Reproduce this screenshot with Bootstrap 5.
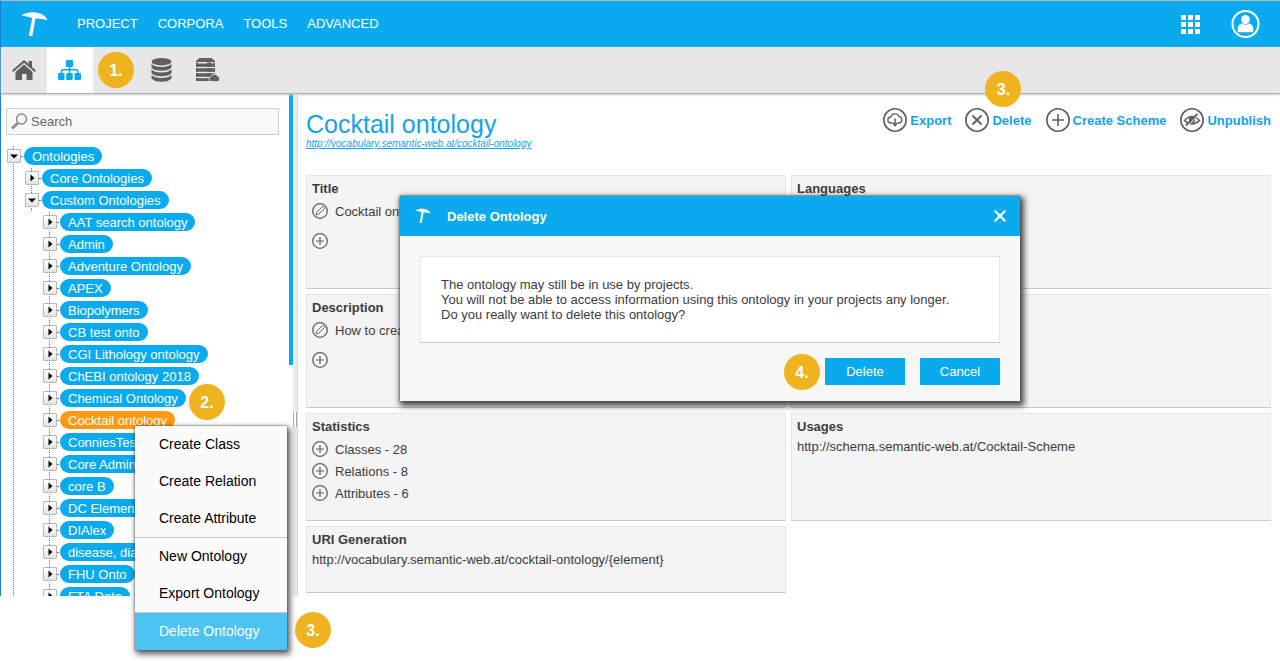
<!DOCTYPE html>
<html lang="en">
<head>
<meta charset="utf-8">
<meta name="viewport" content="width=device-width, initial-scale=1">
<title>Cocktail ontology</title>
<link href="https://cdn.jsdelivr.net/npm/bootstrap@5.3.0/dist/css/bootstrap.min.css" rel="stylesheet">
<style>
  :root { --brand: #0aabee; --ink: #3c3c3c; --icon: #5f5f5f; }
  body { font-family: "Liberation Sans", Arial, sans-serif; font-size: 13px; line-height: 15px; color: var(--ink); background: #fff; }
  a { text-decoration: none; }
  svg { display: block; flex: none; }
  .app { height: calc(100vh - 65px); border-top: 1px solid #b4b4b4; border-left: 1px solid #1b7fd4; background: #fefefe; }

  /* header */
  .topbar { background: var(--brand); height: 46px; padding: 0 20px; flex: none; }
  .topbar .nav-link { color: #fff; padding: 0 0 2px; }
  .main-menu { gap: 20px; margin-left: 29px; }
  .topbar-right { gap: 30px; }
  .icon-btn { border: 0; background: none; padding: 0; color: inherit; }
  .toolbar { background: #e7e7e7; height: 47px; border-bottom: 1px solid #b0b0b0; box-shadow: 0 1px 2px #ccc; flex: none; position: relative; z-index: 1; }
  .tool { width: 46px; color: var(--icon); }
  .tool.active { background: #fff; color: var(--brand); }
  .step { width: 36px; height: 36px; border-radius: 50%; background: #efb31f; color: #fff; font-weight: bold; font-size: 16px; flex: none; display: flex; align-items: center; justify-content: center; z-index: 5; }

  /* tree */
  .sidebar { width: 288px; flex: none; padding: 14px 0 0 5px; overflow: hidden; }
  .search-box { width: 273px; height: 27px; border: 1px solid #cfcfcf; background: #f8f8f8; padding-left: 4px; gap: 3px; }
  .search-box input { border: 0; background: none; padding: 0; color: #666; outline: 0; }
  .search-box input::placeholder { color: #666; }
  .tree { margin: 10px 0 0 1px; }
  .tree ul { padding-left: 18px; }
  .node { position: relative; height: 22px; gap: 3px; }
  .node::before, .root-item::before { content: ""; position: absolute; left: 6px; top: 1px; bottom: 0; border-left: 1px dotted #777; }
  .node::after { content: ""; position: absolute; left: 14px; width: 4px; top: 11px; border-top: 1px dotted #777; }
  .root-item { position: relative; }
  .toggle { position: relative; z-index: 1; width: 14px; height: 14px; padding: 0; border: 1px solid #b9b9b9; border-radius: 1px; background: linear-gradient(#fff, #e4e4e4); display: flex; align-items: center; justify-content: center; color: #000; }
  .pill { height: 18px; border-radius: 9px; background: var(--brand); color: #fff; padding: 2px 8px 0; line-height: 15px; white-space: nowrap; position: relative; z-index: 1; }
  .pill.chosen { background: #ff9812; }
  .track { width: 4px; flex: none; background: #fefefe; }
  .thumb { height: 54%; background: var(--brand); }
  .splitter { width: 5px; flex: none; background: #ebebeb; border-right: 1px solid #d8d8d8; padding-top: 148px; }
  .grip { width: 4px; height: 15px; border: solid #aaa; border-width: 0 1px; background: #fff; }

  /* details */
  .details { padding: 0 9px 0 8px; min-width: 0; }
  .details-head { height: 81px; padding-top: 16px; }
  h1 { font-size: 25px; line-height: 28px; font-weight: normal; color: #14a3ea; margin: 0; }
  .uri { font-size: 10px; line-height: 12px; font-style: italic; text-decoration: underline; color: #14a3ea; display: block; }
  .actions { gap: 14px; height: 24px; margin-top: -2px; }
  .action { gap: 3px; font-weight: bold; color: #12a3ea; border: 0; background: none; padding: 0; position: relative; white-space: nowrap; }
  .action svg, .panel svg { color: var(--icon); }
  .action .step { position: absolute; left: 20px; bottom: 25px; }
  .panels { display: grid; grid-template-columns: 1fr 1fr; gap: 5px; }
  .panel { background: #f4f4f4; border: 1px solid #e6e6e6; border-bottom-color: #c8c8c8; padding: 5px; min-height: 67px; }
  .panel.tall { min-height: 114px; }
  .panel.mid { min-height: 108px; }
  .panel h2 { font-size: 13px; line-height: 15px; font-weight: bold; margin: 0 0 5px; }
  .line { gap: 7px; height: 22px; }
  .tall .line { margin-bottom: 8px; }
  .panel.listed h2 { margin-bottom: 4px; }

  /* overlays */
  .context { position: absolute; left: 135px; top: 426px; width: 152px; background: #fbfbfb; box-shadow: 0 0 2px #555, 2px 3px 6px 1px rgba(0,0,0,.65); z-index: 10; }
  .context button { display: block; width: 100%; height: 37px; padding: 0 0 0 24px; border: 0; background: none; color: #000; font-size: 14px; text-align: left; }
  .context .rule { height: 1px; background: #c8c8c8; }
  .context button.hot { background: #4dc3f2; color: #fff; }
  .context .step { position: absolute; left: 160px; bottom: 2px; }
  .step-tree { position: absolute; left: 189px; top: 384px; }
  .dialog { position: absolute; left: 400px; top: 196px; width: 620px; background: #f7f7f7; box-shadow: 0 0 2px #444, 2px 3px 6px 2px rgba(0,0,0,.7); z-index: 8; }
  .dialog-head { background: var(--brand); color: #fff; height: 40px; padding: 0 14px 0 15px; font-weight: bold; }
  .dialog-text { margin: 20px 20px 15px; padding: 20px; background: #fff; border: 1px solid #e6e6e6; border-bottom-color: #c8c8c8; }
  .dialog-foot { padding: 0 20px 16px; gap: 15px; position: relative; }
  .dialog-foot .btn { width: 80px; height: 27px; padding: 0; border: 0; border-radius: 0; background: var(--brand); color: #fff; font-size: 13px; line-height: 27px; }
  .dialog-foot .step { position: absolute; right: 200px; top: -4px; }
</style>
</head>
<body class="position-relative min-vh-100">
<svg width="0" height="0" class="position-absolute" aria-hidden="true">
  <symbol id="umbrella" viewBox="0 0 27 25"><path fill="currentColor" d="M0 3.800C4 .9 8 .2 12 .2C19 .3 25 3.600 26.500 8.300C22.500 6.700 18 6.800 14.500 6.500L11.200 24.300L7.900 23.800L11.200 6C7 4.800 3.500 3.600 0 3.800Z"/></symbol>
  <symbol id="plus" viewBox="0 0 16 16"><g fill="none" stroke="currentColor"><circle cx="8" cy="8" r="7.300" stroke-width="1.300"/><path d="M8 4v8M4 8h8" stroke-width="1.200"/></g></symbol>
  <symbol id="pencil" viewBox="0 0 16 16"><g fill="none" stroke="currentColor"><circle cx="8" cy="8" r="7.300" stroke-width="1.300"/><path d="M4 12l.8-2.800 6-6 2 2-6 6z" stroke-width=".9"/></g></symbol>
  <symbol id="right" viewBox="0 0 8 8"><path fill="currentColor" d="M2.500 .5L6.500 4L2.500 7.500Z"/></symbol>
  <symbol id="down" viewBox="0 0 8 8"><path fill="currentColor" d="M0 2.500H8L4 6.500Z"/></symbol>
</svg>

<div class="app d-flex flex-column">
  <header class="topbar d-flex align-items-center">
    <a href="#" class="text-white" aria-label="Home"><svg width="27" height="25"><use href="#umbrella"/></svg></a>
    <nav class="nav main-menu flex-grow-1">
      <a class="nav-link" href="#">PROJECT</a><a class="nav-link" href="#">CORPORA</a><a class="nav-link" href="#">TOOLS</a><a class="nav-link" href="#">ADVANCED</a>
    </nav>
    <div class="topbar-right d-flex align-items-center text-white">
      <button class="icon-btn" aria-label="Applications"><svg width="20" height="19" fill="currentColor"><path d="M0 0h5v5H0zM7 0h5v5H7zM14 0h5v5h-5zM0 7h5v5H0zM7 7h5v5H7zM14 7h5v5h-5zM0 14h5v5H0zM7 14h5v5H7zM14 14h5v5h-5z"/></svg></button>
      <button class="icon-btn" aria-label="Account"><svg width="29" height="28" viewBox="0 0 29 28"><circle cx="14.500" cy="14" r="13" fill="none" stroke="#fff" stroke-width="2"/><g fill="#fff"><ellipse cx="14.500" cy="9.500" rx="4.300" ry="4.600"/><path d="M6.500 20.500c0-4 1.500-6.200 4.300-7.200c2 1.900 5.400 1.900 7.400 0c2.800 1 4.300 3.200 4.300 7.200q0 1.700-1.700 1.700H8.200q-1.700 0-1.700-1.700z"/></g></svg></button>
    </div>
  </header>

  <nav class="toolbar d-flex">
    <a href="#" class="tool d-flex align-items-center justify-content-center" aria-label="Dashboard"><svg width="24" height="20" fill="currentColor" viewBox="0 0 24 20"><path d="M12 0L0 10.500L1.300 12L12 2.800L22.700 12L24 10.500L20 7V1h-3.500v3z"/><path d="M12 4.600L3.500 12v8H10v-6h4.500v6H20.500v-8z"/></svg></a>
    <a href="#" class="tool active d-flex align-items-center justify-content-center" aria-label="Ontologies"><svg width="24" height="20" viewBox="0 0 24 20"><g fill="currentColor"><rect x="8" width="7" height="7" rx="1"/><rect y="13" width="6.500" height="7" rx="1"/><rect x="8.200" y="13" width="6.500" height="7" rx="1"/><rect x="16.500" y="13" width="6.500" height="7" rx="1"/></g><path d="M11.500 6v8M3.500 14v-3q0-1.300 1.300-1.300h13.600q1.300 0 1.300 1.300v3" fill="none" stroke="currentColor" stroke-width="1.600"/></svg></a>
    <span class="tool d-flex align-items-center justify-content-center"><span class="step">1.</span></span>
    <a href="#" class="tool d-flex align-items-center justify-content-center" aria-label="Data"><svg width="22" height="24" viewBox="0 0 22 24" fill="currentColor"><ellipse cx="10.500" cy="3.700" rx="10" ry="3.700"/><path d="M.5 6q3 3 10 3t10-3v3.500q-2.500 3.200-10 3.200T.5 9.500zM.5 11.500q3 3 10 3t10-3V15q-2.500 3.200-10 3.200T.5 15zM.5 17q3 3 10 3t10-3v3.300q-2.500 3.500-10 3.500T.5 20.300z"/></svg></a>
    <a href="#" class="tool d-flex align-items-center justify-content-center" aria-label="Server"><svg width="24" height="24" viewBox="0 0 24 24" fill="currentColor"><path d="M3.500 0h12L19 3v1.500H0V3zM0 5h19v4H0zM0 10h19v4H0zM0 15h19v4H0zM0 20h19v3H0z"/><path d="M2 4.700h9M2 9.500h9M2 14.500h9M2 19.500h9M15.500 4.700h2M15.500 9.500h2M15.500 14.500h2" stroke="#e7e7e7" stroke-width="1.500"/><path d="M15 23.500a2.800 2.800 0 0 1 0-5.300a3.500 3.500 0 0 1 6.300-.3a3 3 0 0 1 .7 5.600z" stroke="#e7e7e7" stroke-width=".8"/></svg></a>
  </nav>

  <div class="d-flex flex-grow-1" style="min-height:0">
    <aside class="sidebar">
      <label class="search-box d-flex align-items-center"><svg width="17" height="17" viewBox="0 0 17 17" fill="none" stroke="#8c8c8c"><circle cx="10.500" cy="6" r="5" stroke-width="1.500"/><path d="M7 10L1 15.500" stroke-width="2.800"/></svg><input type="text" placeholder="Search" aria-label="Search"></label>
      <ul class="tree list-unstyled" id="tree">
        <li class="root-item"><div class="node d-flex align-items-center"><button class="toggle" aria-label="Collapse"><svg width="8" height="8"><use href="#down"/></svg></button><a class="pill" href="#">Ontologies</a></div>
          <ul class="list-unstyled">
            <li><div class="node d-flex align-items-center"><button class="toggle" aria-label="Expand"><svg width="8" height="8"><use href="#right"/></svg></button><a class="pill" href="#">Core Ontologies</a></div></li>
            <li><div class="node d-flex align-items-center"><button class="toggle" aria-label="Collapse"><svg width="8" height="8"><use href="#down"/></svg></button><a class="pill" href="#">Custom Ontologies</a></div>
              <ul class="list-unstyled" id="custom"></ul>
            </li>
          </ul>
        </li>
      </ul>
    </aside>
    <div class="track"><div class="thumb"></div></div>
    <div class="splitter d-flex align-items-center"><div class="grip"></div></div>

    <main class="details flex-grow-1">
      <div class="details-head d-flex justify-content-between align-items-start">
        <div><h1>Cocktail ontology</h1><a class="uri" href="#">http://vocabulary.semantic-web.at/cocktail-ontology</a></div>
        <div class="actions d-flex">
          <button class="action d-flex align-items-center"><svg width="24" height="24" viewBox="0 0 24 24" fill="none" stroke="currentColor"><circle cx="12" cy="12" r="11.200" stroke-width="1.600"/><path d="M9.500 15H8a3 3 0 0 1-.3-6a4.500 4.500 0 0 1 8.300-.7a3.400 3.400 0 0 1 0 6.700h-1.500" stroke-width="1.300"/><path d="M12 10.500V17M9.800 15L12 17.500L14.200 15" stroke-width="1.500"/></svg>Export</button>
          <button class="action d-flex align-items-center"><svg width="24" height="24" viewBox="0 0 24 24" fill="none" stroke="currentColor"><circle cx="12" cy="12" r="11.200" stroke-width="1.600"/><path d="M7.500 7.500l9 9M16.500 7.500l-9 9" stroke-width="1.800"/></svg>Delete<span class="step">3.</span></button>
          <button class="action d-flex align-items-center"><svg width="24" height="24" viewBox="0 0 24 24" fill="none" stroke="currentColor"><circle cx="12" cy="12" r="11.200" stroke-width="1.600"/><path d="M12 6v12M6 12h12" stroke-width="1.600"/></svg>Create Scheme</button>
          <button class="action d-flex align-items-center"><svg width="24" height="24" viewBox="0 0 24 24" fill="none" stroke="currentColor"><circle cx="12" cy="12" r="11.200" stroke-width="1.600"/><path d="M4.500 12.500q7.500-8 15 0q-7.500 7-15 0z" stroke-width="1.600"/><circle cx="12" cy="11.800" r="2.800" fill="currentColor"/><path d="M6 17.500L17.500 6" stroke-width="2"/><path d="M7.500 18L19 6.500" stroke="#fefefe" stroke-width="1"/></svg>Unpublish</button>
        </div>
      </div>
      <div class="panels">
        <section class="panel tall listed"><h2>Title</h2>
          <div class="line d-flex align-items-center"><svg width="16" height="16"><use href="#pencil"/></svg>Cocktail ontology</div>
          <div class="line d-flex align-items-center"><svg width="16" height="16"><use href="#plus"/></svg></div></section>
        <section class="panel tall"><h2>Languages</h2></section>
        <section class="panel tall listed"><h2>Description</h2>
          <div class="line d-flex align-items-center"><svg width="16" height="16"><use href="#pencil"/></svg>How to create</div>
          <div class="line d-flex align-items-center"><svg width="16" height="16"><use href="#plus"/></svg></div></section>
        <section class="panel tall"></section>
        <section class="panel mid listed"><h2>Statistics</h2>
          <div class="line d-flex align-items-center"><svg width="16" height="16"><use href="#plus"/></svg>Classes - 28</div>
          <div class="line d-flex align-items-center"><svg width="16" height="16"><use href="#plus"/></svg>Relations - 8</div>
          <div class="line d-flex align-items-center"><svg width="16" height="16"><use href="#plus"/></svg>Attributes - 6</div></section>
        <section class="panel mid"><h2>Usages</h2><div>http://schema.semantic-web.at/Cocktail-Scheme</div></section>
        <section class="panel"><h2>URI Generation</h2><div>http://vocabulary.semantic-web.at/cocktail-ontology/{element}</div></section>
      </div>
    </main>
  </div>
</div>

<span class="step step-tree">2.</span>

<div class="context" role="menu">
  <button role="menuitem">Create Class</button><button role="menuitem">Create Relation</button><button role="menuitem">Create Attribute</button>
  <div class="rule"></div>
  <button role="menuitem">New Ontology</button><button role="menuitem">Export Ontology</button>
  <div class="rule"></div>
  <button role="menuitem" class="hot">Delete Ontology</button>
  <span class="step">3.</span>
</div>

<div class="dialog" role="dialog" aria-labelledby="dlg-title">
  <div class="dialog-head d-flex align-items-center">
    <svg width="16" height="16"><use href="#umbrella"/></svg>
    <span id="dlg-title" class="flex-grow-1 ps-3">Delete Ontology</span>
    <button class="icon-btn" aria-label="Close"><svg width="12" height="12" viewBox="0 0 12 12" stroke="#fff" stroke-width="2"><path d="M.7 .7l10.600 10.600M11.300 .7L.7 11.300"/></svg></button>
  </div>
  <div class="dialog-text">The ontology may still be in use by projects.<br>You will not be able to access information using this ontology in your projects any longer.<br>Do you really want to delete this ontology?</div>
  <div class="dialog-foot d-flex justify-content-end">
    <span class="step">4.</span>
    <button class="btn">Delete</button><button class="btn">Cancel</button>
  </div>
</div>

<script src="https://cdn.jsdelivr.net/npm/bootstrap@5.3.0/dist/js/bootstrap.bundle.min.js"></script>
<script>
  const names = ["AAT search ontology", "Admin", "Adventure Ontology", "APEX", "Biopolymers", "CB test onto", "CGI Lithology ontology", "ChEBI ontology 2018", "Chemical Ontology", "Cocktail ontology", "ConniesTest", "Core Admin", "core B", "DC Elements", "DIAlex", "disease, diagnosis", "FHU Onto", "FTA Data"];
  document.getElementById("custom").innerHTML = names.map(n =>
    `<li><div class="node d-flex align-items-center"><button class="toggle" aria-label="Expand"><svg width="8" height="8"><use href="#right"/></svg></button><a class="pill${n === "Cocktail ontology" ? " chosen" : ""}" href="#">${n}</a></div></li>`).join("");
</script>
</body>
</html>
